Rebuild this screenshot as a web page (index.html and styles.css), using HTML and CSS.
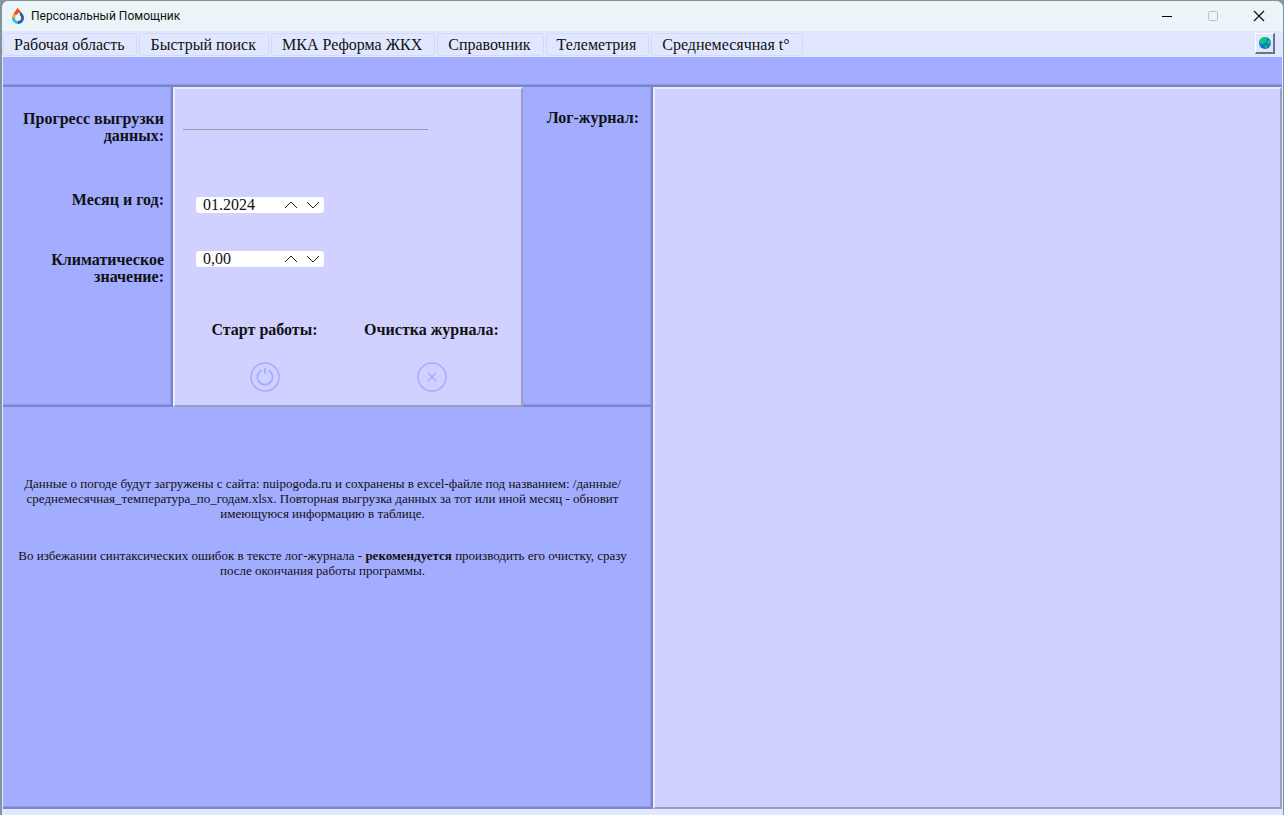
FILE: index.html
```html
<!DOCTYPE html>
<html lang="ru">
<head>
<meta charset="utf-8">
<title>Персональный Помощник</title>
<link rel="stylesheet" href="styles.css">
</head>
<body>
<div class="window">
  <header class="titlebar">
    <svg class="logo" width="14" height="18" viewBox="0 0 14 18" aria-hidden="true">
      <path d="M7 1C4.500 4 1 7.500 1 11a6 6 0 0 0 1 3.300L4.500 12C3.500 9 5.500 7.500 7 5.500z" fill="#f4a340"/>
      <path d="M6.500 1L3 6.500 5.500 8 7.500 5.500 10 8 10.500 5.500z" fill="#ea4b2d"/>
      <path d="M10.500 5.500C12.200 7.500 13 9.200 13 11a6 6 0 0 1-6 6v-3c2.200 0 3.200-1.400 3.200-3 0-1.200-.8-2.300-1.700-3.500z" fill="#245fa8"/>
      <path d="M1 10.500A6 6 0 0 0 7 17v-3c-1.900 0-3-1.300-3.200-3z" fill="#35bde8"/>
    </svg>
    <h1 class="title">Персональный Помощник</h1>
    <div class="caption-buttons">
      <button class="caption" type="button" aria-label="Свернуть"><svg width="12" height="12" viewBox="0 0 12 12"><path d="M1 6.500h10" stroke="#000"/></svg></button>
      <button class="caption" type="button" aria-label="Развернуть" disabled><svg width="12" height="12" viewBox="0 0 12 12"><rect x="1.500" y="1.500" width="9" height="9" rx="1" fill="none" stroke="#b9c1c3"/></svg></button>
      <button class="caption" type="button" aria-label="Закрыть"><svg width="12" height="12" viewBox="0 0 12 12"><path d="M1 1l10 10M11 1L1 11" stroke="#111" stroke-width="1.200"/></svg></button>
    </div>
  </header>
  <nav class="tabs">
    <button class="tab" type="button">Рабочая область</button>
    <button class="tab" type="button">Быстрый поиск</button>
    <button class="tab" type="button">МКА Реформа ЖКХ</button>
    <button class="tab" type="button">Справочник</button>
    <button class="tab" type="button">Телеметрия</button>
    <button class="tab" type="button">Среднемесячная t°</button>
    <button class="globe" type="button" aria-label="Сайт">
      <svg width="14" height="14" viewBox="0 0 14 14"><circle cx="7" cy="7" r="6" fill="#0878cd"/><path d="M1.200 6C2 2.500 5 .7 8 1.100L9.500 3 8 4l1 2-2 .5L5.500 8 3 8.500zM9 5l3-1 .9 3-1.400 1.500L9.500 8zM6 10l3-1 1 1.500-2 1.800z" fill="#12c777"/></svg>
    </button>
  </nav>
  <div class="band"></div>
  <main class="workspace">
    <section class="cell blue labels">
      <h2 class="label label-progress">Прогресс выгрузки данных:</h2>
      <label class="label label-month" for="month">Месяц и год:</label>
      <label class="label label-climate" for="climate">Климатическое значение:</label>
    </section>
    <section class="cell light controls">
      <div class="progress"></div>
      <div class="spin spin-month">
        <input id="month" class="spin-input" type="text" value="01.2024">
        <button class="step" type="button" aria-label="Следующий месяц"><svg width="14" height="8" viewBox="0 0 14 8"><path d="M1 7l6-6 6 6" fill="none" stroke="#222"/></svg></button>
        <button class="step" type="button" aria-label="Предыдущий месяц"><svg width="14" height="8" viewBox="0 0 14 8"><path d="M1 1l6 6 6-6" fill="none" stroke="#222"/></svg></button>
      </div>
      <div class="spin">
        <input id="climate" class="spin-input" type="text" value="0,00">
        <button class="step" type="button" aria-label="Увеличить"><svg width="14" height="8" viewBox="0 0 14 8"><path d="M1 7l6-6 6 6" fill="none" stroke="#222"/></svg></button>
        <button class="step" type="button" aria-label="Уменьшить"><svg width="14" height="8" viewBox="0 0 14 8"><path d="M1 1l6 6 6-6" fill="none" stroke="#222"/></svg></button>
      </div>
      <div class="actions">
        <div class="action">
          <h2 class="label" id="start">Старт работы:</h2>
          <button class="round" type="button" aria-labelledby="start"><svg width="30" height="30" viewBox="0 0 30 30" fill="none" stroke="#a2adff"><circle cx="15" cy="15" r="14" stroke-width="1.500"/><path d="M11.500 8.300a7.600 7.600 0 1 0 7 0M15 6v6" stroke-width="1.800"/></svg></button>
        </div>
        <div class="action">
          <h2 class="label" id="clear">Очистка журнала:</h2>
          <button class="round" type="button" aria-labelledby="clear"><svg width="30" height="30" viewBox="0 0 30 30" fill="none" stroke="#a2adff"><circle cx="15" cy="15" r="14" stroke-width="1.500"/><path d="M11 11l8 8M19 11l-8 8" stroke-width="1.500"/></svg></button>
        </div>
      </div>
    </section>
    <section class="cell blue log-title">
      <h2 class="label">Лог-журнал:</h2>
    </section>
    <section class="cell light log" aria-label="Лог-журнал"></section>
    <section class="cell blue notes">
      <p class="note">Данные о погоде будут загружены с сайта: nuipogoda.ru и сохранены в excel-файле под названием: /данные/<wbr>среднемесячная_температура_по_годам.xlsx. Повторная выгрузка данных за тот или иной месяц - обновит имеющуюся информацию в таблице.</p>
      <p class="note">Во избежании синтаксических ошибок в тексте лог-журнала - <b>рекомендуется</b> производить его очистку, сразу после окончания работы программы.</p>
    </section>
  </main>
</div>
</body>
</html>
```
FILE: styles.css
```css
* { box-sizing: border-box; }

body {
  margin: 0;
  background: #829aa5;
  font-family: "Liberation Serif", "Times New Roman", serif;
  color: #111;
}

button { font: inherit; color: inherit; padding: 0; border: 0; background: none; }
button svg { display: block; }
h1, h2, p { margin: 0; }

.window {
  display: flex;
  flex-direction: column;
  height: 100vh;
  border: solid #82939b;
  border-width: 1px 1px 0 2px;
  border-radius: 8px 8px 0 0;
  overflow: hidden;
  background: #e1e7ff;
  padding: 0 1px 6px;
}

.titlebar {
  display: flex;
  align-items: center;
  height: 30px;
  margin: 0 -1px;
  padding: 0 1px 1px 9px;
  background: #ebf5f8;
}

.title {
  flex: 1;
  margin-left: 6px;
  font: 12px Roboto, "Noto Sans", sans-serif;
}

.caption-buttons { display: flex; }
.caption { display: grid; place-items: center; width: 46px; height: 28px; }

.tabs {
  display: flex;
  align-items: flex-start;
  gap: 2px;
  height: 26px;
  padding: 2px 7px 0 0;
}

.tab {
  height: 23px;
  padding: 0 12px 0 10px;
  border: 1px solid #d5daf3;
  border-radius: 3px;
  font-size: 16px;
  line-height: 20px;
  white-space: nowrap;
}

.globe {
  display: grid;
  place-items: center;
  width: 20px;
  height: 21px;
  margin-left: auto;
  border: solid;
  border-width: 1px 2px 2px 1px;
  border-color: #fff #71747f #71747f #fff;
}

.band {
  height: 30px;
  background: #a2adff;
  border-bottom: 2px solid #7c85c7;
  box-shadow: inset 0 -1px #8f99e2;
}

.workspace {
  flex: 1;
  display: grid;
  grid-template: 320px 1fr / 170px 350px 130px 1fr;
}

.cell { border: 0 solid; }

.blue {
  background: #a2adff;
  border-color: #7c85c7;
  border-width: 0 2px 2px 0;
  box-shadow: inset -1px -1px #929ce6;
}

.light {
  background: #d0d1ff;
  border-width: 2px;
  border-color: #e9eaff #9d9dc2 #9d9dc2 #e9eaff;
}

.label { font-size: 16px; line-height: 17px; font-weight: bold; }

.labels {
  display: flex;
  flex-direction: column;
  text-align: right;
  padding: 23px 7px 0 15px;
}

.label-progress { margin-bottom: 47px; }
.label-month { margin-bottom: 43px; }

.controls { display: flex; flex-direction: column; padding: 40px 8px 0; }
.progress { width: 245px; height: 1px; margin-bottom: 67px; background: #9a9aac; }

.spin {
  display: flex;
  align-items: center;
  width: 128px;
  height: 16px;
  margin-left: 13px;
  border-radius: 3px;
  background: #fff;
}

.spin-month { margin-bottom: 38px; }

.spin-input {
  flex: 1;
  min-width: 0;
  height: 16px;
  padding: 0 0 0 7px;
  border: 0;
  background: none;
  font: 16px/16px "Liberation Serif", serif;
  color: #111;
}

.step { display: grid; place-items: center; width: 22px; height: 16px; }

.actions { display: grid; grid-template-columns: 1fr 1fr; gap: 4px; padding-top: 54px; }
.action { display: flex; flex-direction: column; align-items: center; gap: 24px; }

.log-title { padding: 22px 12px 0 0; text-align: right; }
.log { grid-column: 4; grid-row: 1 / 3; }

.notes {
  grid-column: 1 / 4;
  display: flex;
  flex-direction: column;
  gap: 27px;
  padding: 69px 18px 0 9px;
  text-align: center;
}

.note { font-size: 13px; line-height: 15px; }
```
